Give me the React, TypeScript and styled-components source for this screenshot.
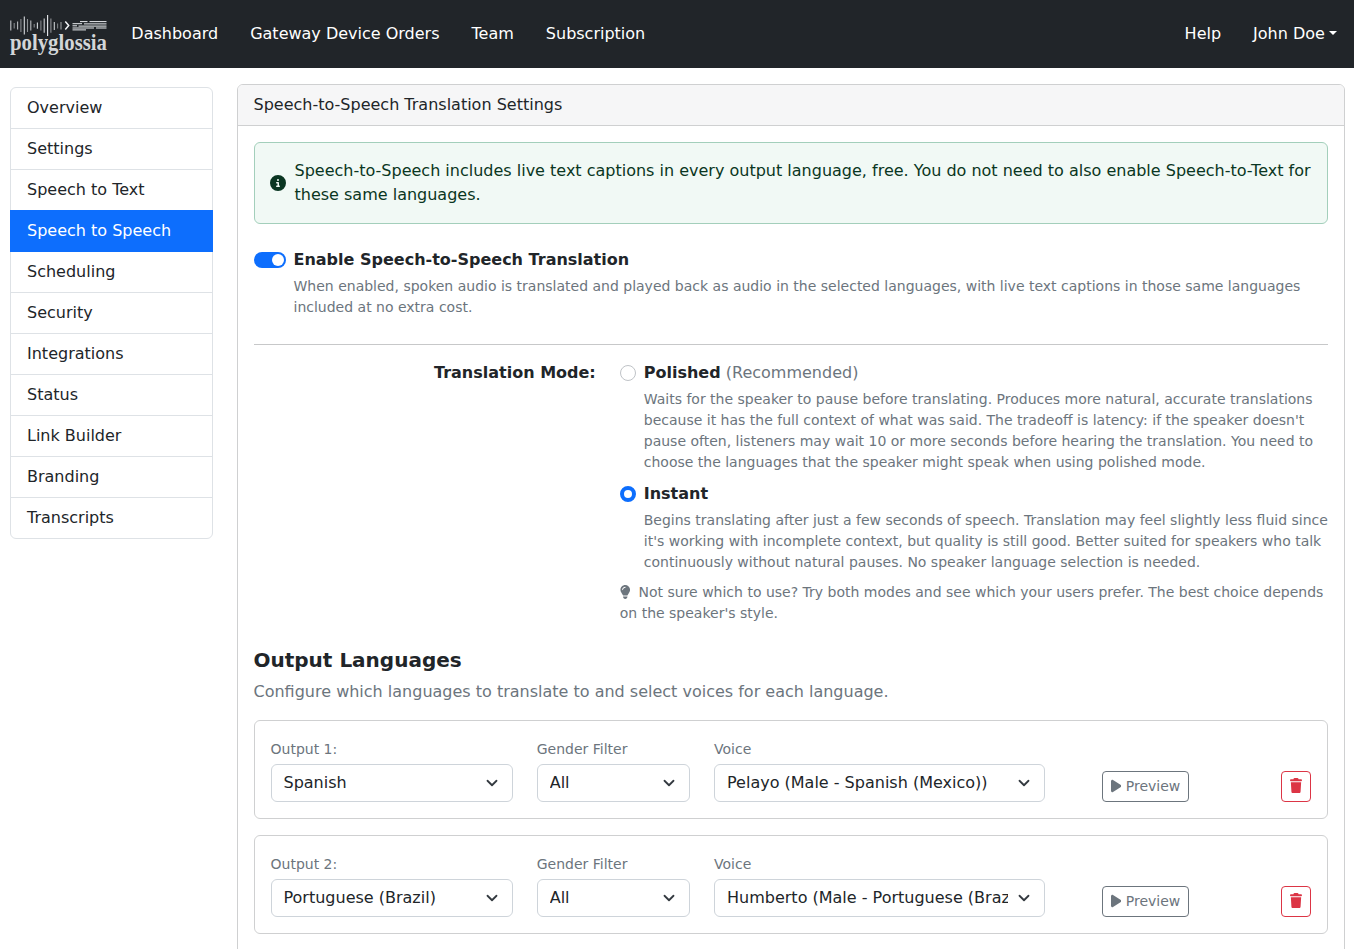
import React from "react";
import styled, { createGlobalStyle, css } from "styled-components";
import { FaCircleInfo, FaLightbulb, FaPlay } from "react-icons/fa6";

const GlobalStyle = createGlobalStyle`
  *, *::before, *::after { box-sizing: border-box; }
  html { overflow: hidden; }
  body {
    margin: 0;
    height: 949px;
    overflow: hidden;
    background: #fff;
    color: #212529;
    font-family: "DejaVu Sans", sans-serif;
    font-size: 16px;
    line-height: 1.5;
  }
`;

const Navbar = styled.nav`
  display: flex;
  align-items: center;
  height: 68px;
  padding: 0 17px 0 8px;
  background: #212529;
`;

const Brand = styled.a`
  display: block;
  width: 107.35px;
  height: 68px;
`;

const NavLinks = styled.div<{ $end?: boolean }>`
  display: flex;
  gap: 32px;
  margin-left: ${(p) => (p.$end ? "auto" : "16px")};
`;

const NavLink = styled.a`
  color: #fff;
  white-space: nowrap;
`;

const Caret = styled.span`
  display: inline-block;
  margin-left: 4.08px;
  vertical-align: 4.08px;
  border-top: 4.8px solid;
  border-right: 4.8px solid transparent;
  border-left: 4.8px solid transparent;
`;

const Page = styled.div`
  display: grid;
  grid-template-columns: 202.5px 1108.33px;
  column-gap: 24px;
  align-items: start;
  padding: 16px 0 0 10px;
`;

const Sidebar = styled.div`
  display: flex;
  flex-direction: column;
  margin-top: 3px;
  border: 1px solid #dee2e6;
  border-radius: 6px;
`;

const SidebarItem = styled.a<{ $active?: boolean }>`
  padding: 8px 16px;
  border-bottom: 1px solid #dee2e6;
  &:last-child {
    border-bottom: 0;
  }
  ${(p) =>
    p.$active &&
    css`
      margin: -1px -1px 0;
      padding: 9px 17px 8px;
      color: #fff;
      background: #0d6efd;
      border-color: #0d6efd;
    `}
`;

const Card = styled.section`
  border: 1px solid #cfd0d1;
  border-radius: 6px;
`;

const CardHeader = styled.header`
  padding: 8px 16px;
  background: #f6f6f7;
  border-bottom: 1px solid #cfd0d1;
  border-radius: 5px 5px 0 0;
`;

const CardBody = styled.div`
  padding: 16px;
`;

const Alert = styled.div`
  display: flex;
  align-items: center;
  gap: 8px;
  margin-bottom: 24px;
  padding: 16px 14px 16px 16px;
  color: #0a3622;
  background: #f1f9f5;
  border: 1px solid #a3cfbb;
  border-radius: 6px;
  svg {
    flex: none;
    margin: 0 0.5px 0 -0.5px;
  }
`;

const ToggleField = styled.div`
  display: grid;
  grid-template-columns: 32px 1fr;
  column-gap: 8px;
`;

const Switch = styled.span`
  display: flex;
  justify-content: flex-end;
  align-items: center;
  width: 32px;
  height: 16px;
  margin-top: 4px;
  padding-right: 2px;
  border-radius: 16px;
  background: #0d6efd;
  &::after {
    content: "";
    width: 12px;
    height: 12px;
    border-radius: 50%;
    background: #fff;
  }
`;

const Strong = styled.span`
  font-weight: 700;
`;

const Muted = styled.span`
  color: #6c757d;
`;

const Description = styled.p`
  margin: 4px -2px 0 0;
  font-size: 14px;
  line-height: 21px;
  color: #6c757d;
`;

const Divider = styled.hr`
  margin: 26px 0 16px;
  border: 0;
  border-top: 1px solid #c7c8c9;
`;

const ModeRow = styled.div`
  display: grid;
  grid-template-columns: 342.25px 1fr;
  column-gap: 24px;
`;

const ModeLabel = styled.div`
  font-weight: 700;
  text-align: right;
`;

const Option = styled.div`
  display: grid;
  grid-template-columns: 16px 1fr;
  column-gap: 8px;
  margin-bottom: 9px;
`;

const Radio = styled.span<{ $checked?: boolean }>`
  width: 16px;
  height: 16px;
  margin-top: 4px;
  border-radius: 50%;
  background: #fff;
  border: ${(p) => (p.$checked ? "4.5px solid #0d6efd" : "1px solid #bfc3c7")};
`;

const Tip = styled.p`
  margin: 0;
  font-size: 14px;
  line-height: 21px;
  color: #6c757d;
  svg {
    width: 10.5px;
    margin-right: 8.25px;
    vertical-align: -1.75px;
  }
`;

const Heading = styled.h5`
  margin: 24px 0 8px;
  font-size: 20px;
  line-height: 24px;
  font-weight: 700;
`;

const Subheading = styled.p`
  margin: 0 0 16px;
  color: #6c757d;
`;

const OutputCard = styled.div`
  display: grid;
  grid-template-columns: 242.2px 153.33px 330.8px 153.6px 1fr;
  column-gap: 24px;
  align-items: end;
  height: 99px;
  margin-bottom: 16px;
  padding: 16px;
  border: 1px solid #cfd0d1;
  border-radius: 6px;
`;

const Field = styled.div`
  min-width: 0;
`;

const FieldLabel = styled.div`
  margin-bottom: 4px;
  font-size: 14px;
  line-height: 21px;
  color: #6c757d;
`;

const SelectBox = styled.div`
  display: flex;
  align-items: center;
  gap: 8px;
  height: 38px;
  padding: 0 12px;
  border: 1px solid #ced4da;
  border-radius: 6px;
  svg {
    flex: none;
  }
`;

const SelectValue = styled.span`
  flex: 1;
  min-width: 0;
  overflow: hidden;
  white-space: nowrap;
`;

const Button = styled.button<{ $danger?: boolean }>`
  display: inline-flex;
  align-items: center;
  justify-content: center;
  justify-self: ${(p) => (p.$danger ? "end" : "center")};
  gap: 4.25px;
  width: ${(p) => (p.$danger ? "30.25px" : "auto")};
  height: 31px;
  padding: 4px 8px;
  font: inherit;
  font-size: 14px;
  line-height: 21px;
  color: ${(p) => (p.$danger ? "#dc3545" : "#6c757d")};
  background: transparent;
  border: 1px solid currentColor;
  border-radius: 4px;
  svg {
    flex: none;
    width: ${(p) => (p.$danger ? "12px" : "10.5px")};
    margin-bottom: 1.5px;
  }
`;

/* x, top, bottom, opacity of each bar in the sound wave */
const waveBars: [number, number, number, number][] = [
  [10.8, 20.5, 30.5, 0.8],
  [14.2, 23, 28.5, 0.5],
  [17.6, 21.5, 29.5, 0.75],
  [20.9, 19, 32, 0.5],
  [24.3, 16.5, 34.5, 0.9],
  [27.5, 19, 32, 0.55],
  [30.8, 20.5, 30.5, 0.75],
  [34.2, 24, 27.5, 0.5],
  [37.4, 22.5, 28.8, 0.9],
  [40.9, 20.5, 30.5, 0.5],
  [44.2, 18.5, 32.8, 0.85],
  [47.6, 15, 36, 1],
  [50.9, 18.5, 32.8, 0.55],
  [54.3, 22, 30, 0.85],
  [57.6, 23.5, 28.5, 0.45],
  [61, 22, 29.5, 0.6],
];

const captionLines: [number, number, number][] = [
  [80, 87.5, 21.6],
  [89.5, 106.5, 21.6],
  [72.5, 82, 23.7],
  [84, 106.5, 23.9],
  [72.5, 77, 25.8],
  [78.5, 106.5, 26.1],
  [72.5, 94, 28],
  [96, 106.5, 28],
  [72.5, 86, 29.9],
];

const Logo = () => (
  <svg width="107" height="68" viewBox="8 0 107 68" aria-label="polyglossia">
    {waveBars.map(([x, top, bottom, opacity]) => (
      <line key={x} x1={x} x2={x} y1={top} y2={bottom} stroke="#e9ecef" strokeWidth="1.1" strokeOpacity={opacity} />
    ))}
    <path d="M65.3 21.6l3.4 4-3.4 4" fill="none" stroke="#f1f3f5" strokeWidth="1.5" />
    {captionLines.map(([from, to, y]) => (
      <line key={`${from}-${y}`} x1={from} x2={to} y1={y} y2={y} stroke="#e9ecef" strokeWidth="1" />
    ))}
    <text
      x="10"
      y="49.6"
      fill="#d3d6d8"
      fontFamily="'Liberation Serif', serif"
      fontWeight="700"
      fontSize="23"
      textLength="97"
      lengthAdjust="spacingAndGlyphs"
    >
      polyglossia
    </text>
  </svg>
);

const TrashIcon = () => (
  <svg width="12" height="15" viewBox="0 -16 448 528" preserveAspectRatio="none" fill="currentColor">
    <path d="M136.7 5.9L128 32H32C14.3 32 0 46.3 0 64S14.3 96 32 96h384c17.7 0 32-14.3 32-32s-14.3-32-32-32h-96l-8.7-26.1C306.9-7.2 294.7-16 280.9-16H167.1c-13.8 0-26 8.8-30.4 21.9zM416 132H32l21.1 335.1C54.7 492.4 75.7 512 101 512h246c25.3 0 46.3-19.6 47.9-44.9L416 132z" />
  </svg>
);

const Chevron = () => (
  <svg width="16" height="12" viewBox="0 0 16 16">
    <path
      d="m2 5 6 6 6-6"
      fill="none"
      stroke="#343a40"
      strokeWidth="2.4"
      strokeLinecap="round"
      strokeLinejoin="round"
    />
  </svg>
);

const Select = ({ label, value }: { label: string; value: string }) => (
  <Field>
    <FieldLabel>{label}</FieldLabel>
    <SelectBox>
      <SelectValue>{value}</SelectValue>
      <Chevron />
    </SelectBox>
  </Field>
);

const sections = [
  "Overview",
  "Settings",
  "Speech to Text",
  "Speech to Speech",
  "Scheduling",
  "Security",
  "Integrations",
  "Status",
  "Link Builder",
  "Branding",
  "Transcripts",
];

const outputs = [
  { language: "Spanish", gender: "All", voice: "Pelayo (Male - Spanish (Mexico))" },
  { language: "Portuguese (Brazil)", gender: "All", voice: "Humberto (Male - Portuguese (Brazil))" },
];

export default function App() {
  return (
    <>
      <GlobalStyle />
      <Navbar>
        <Brand>
          <Logo />
        </Brand>
        <NavLinks>
          <NavLink>Dashboard</NavLink>
          <NavLink>Gateway Device Orders</NavLink>
          <NavLink>Team</NavLink>
          <NavLink>Subscription</NavLink>
        </NavLinks>
        <NavLinks $end>
          <NavLink>Help</NavLink>
          <NavLink>
            John Doe
            <Caret />
          </NavLink>
        </NavLinks>
      </Navbar>
      <Page>
        <Sidebar>
          {sections.map((name) => (
            <SidebarItem key={name} $active={name === "Speech to Speech"}>
              {name}
            </SidebarItem>
          ))}
        </Sidebar>
        <Card>
          <CardHeader>Speech-to-Speech Translation Settings</CardHeader>
          <CardBody>
            <Alert>
              <FaCircleInfo size={16} />
              <span>
                Speech-to-Speech includes live text captions in every output language, free. You do not need to also
                enable Speech-to-Text for these same languages.
              </span>
            </Alert>
            <ToggleField>
              <Switch />
              <div>
                <Strong>Enable Speech-to-Speech Translation</Strong>
                <Description>
                  When enabled, spoken audio is translated and played back as audio in the selected languages, with
                  live text captions in those same languages included at no extra cost.
                </Description>
              </div>
            </ToggleField>
            <Divider />
            <ModeRow>
              <ModeLabel>Translation Mode:</ModeLabel>
              <div>
                <Option>
                  <Radio />
                  <div>
                    <Strong>Polished</Strong> <Muted>(Recommended)</Muted>
                    <Description>
                      Waits for the speaker to pause before translating. Produces more natural, accurate translations
                      because it has the full context of what was said. The tradeoff is latency: if the speaker
                      doesn't pause often, listeners may wait 10 or more seconds before hearing the translation. You
                      need to choose the languages that the speaker might speak when using polished mode.
                    </Description>
                  </div>
                </Option>
                <Option>
                  <Radio $checked />
                  <div>
                    <Strong>Instant</Strong>
                    <Description>
                      Begins translating after just a few seconds of speech. Translation may feel slightly less fluid
                      since it's working with incomplete context, but quality is still good. Better suited for
                      speakers who talk continuously without natural pauses. No speaker language selection is needed.
                    </Description>
                  </div>
                </Option>
                <Tip>
                  <FaLightbulb size={14} />
                  Not sure which to use? Try both modes and see which your users prefer. The best choice depends on
                  the speaker's style.
                </Tip>
              </div>
            </ModeRow>
            <Heading>Output Languages</Heading>
            <Subheading>Configure which languages to translate to and select voices for each language.</Subheading>
            {outputs.map((output, index) => (
              <OutputCard key={output.language}>
                <Select label={`Output ${index + 1}:`} value={output.language} />
                <Select label="Gender Filter" value={output.gender} />
                <Select label="Voice" value={output.voice} />
                <Button>
                  <FaPlay size={14} />
                  Preview
                </Button>
                <Button $danger>
                  <TrashIcon />
                </Button>
              </OutputCard>
            ))}
          </CardBody>
        </Card>
      </Page>
    </>
  );
}
